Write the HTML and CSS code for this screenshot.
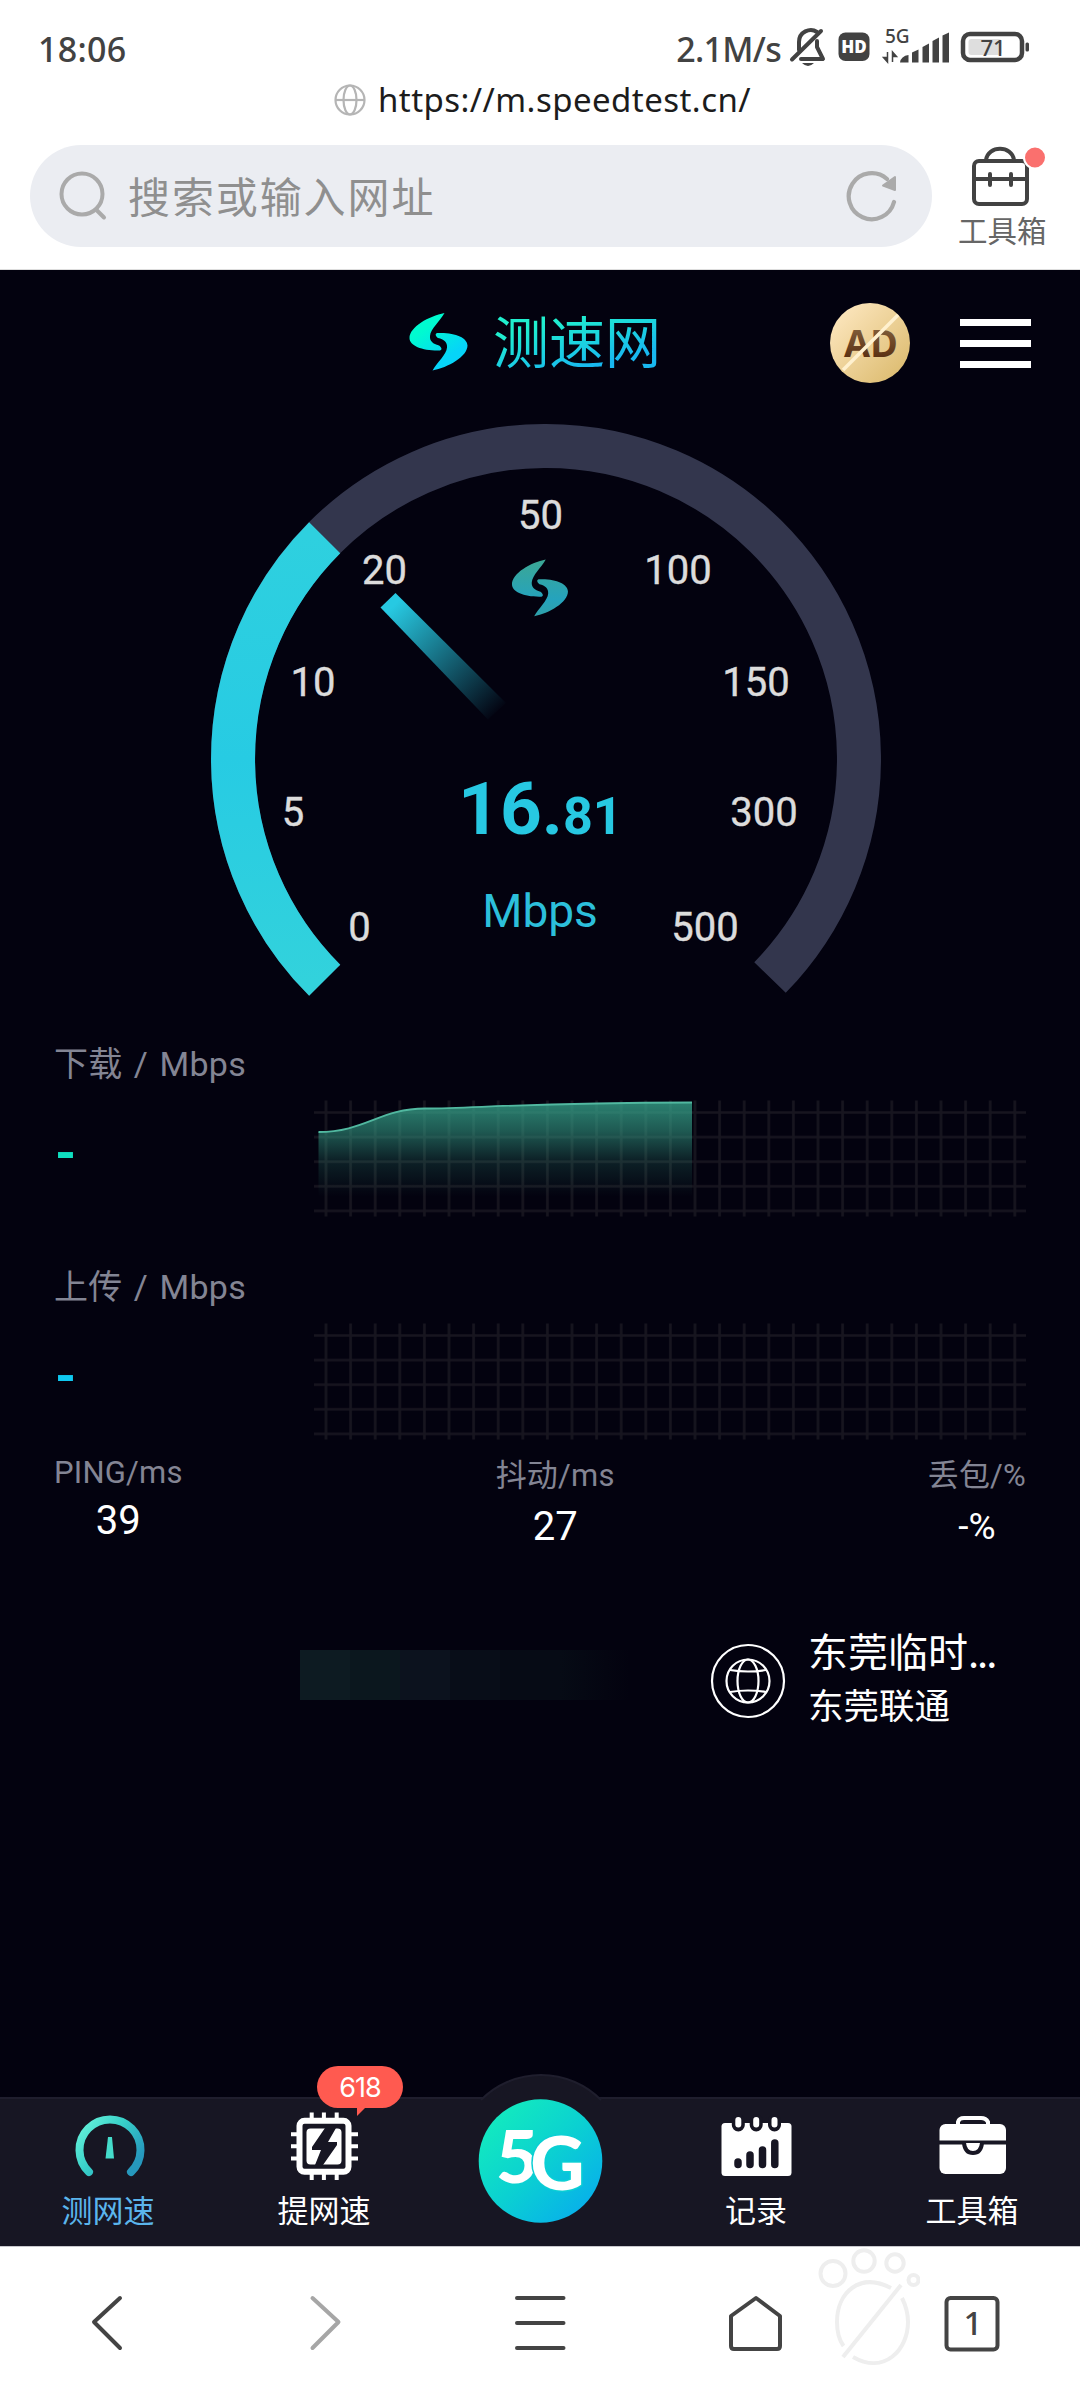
FILE: index.html
```html
<!DOCTYPE html>
<html lang="zh-CN">
<head>
  <meta charset="UTF-8">
  <title>测速网</title>
  <link rel="stylesheet" href="styles.css">
</head>
<body>
  <div class="status">
    <span class="time">18:06</span>
    <span class="rate">2.1M/s</span>
    <svg class="status-icons" viewBox="785 20 255 60">
      <g fill="none" stroke="#424242" stroke-width="4" stroke-linecap="round" stroke-linejoin="round">
        <path d="M799 51V43C799 33 810 28 817 33"/>
        <path d="M817 42V48L823 60H801"/>
        <path d="M792 60.500L821 32"/>
      </g>
      <path d="M802 64H814Q808 70 802 64Z" fill="#424242"/>
      <rect x="838.500" y="33.500" width="31" height="28.500" rx="7" fill="#424242"/>
      <text x="854" y="53.500" class="hd">HD</text>
      <text x="885" y="44" class="net">5G</text>
      <path d="M887.500 53V63L883.500 58.500H887.500M892.500 63V53L896.500 57.500H892.500" fill="#424242" stroke="#424242" stroke-width="1.500"/>
      <g fill="#424242">
        <path d="M900 63.500Q901 57 908.500 56V63.500Z"/>
        <path d="M912 63.500V53.500L918.500 50.500V63.500Z"/>
        <path d="M922.500 63.500V48L929 44.500V63.500Z"/>
        <path d="M932.500 63.500V42L939 38.500V63.500Z"/>
        <path d="M942.500 63.500V36.500L949 33.500V63.500Z"/>
      </g>
      <rect x="963" y="35" width="59" height="26" rx="7" fill="none" stroke="#424242" stroke-width="4.500"/>
      <rect x="968.500" y="40" width="33" height="16" rx="3" fill="#dedede"/>
      <rect x="1025.500" y="43.500" width="3.500" height="9" rx="1.500" fill="#424242"/>
      <text x="993" y="56.500" class="battery">71</text>
    </svg>
  </div>

  <div class="url">
    <svg width="32" height="32" viewBox="0 0 32 32" fill="none" stroke="#b5b5b5" stroke-width="2.200">
      <circle cx="16" cy="16" r="14.500"/>
      <ellipse cx="16" cy="16" rx="6.500" ry="14.500"/>
      <path d="M1.500 16H30.500"/>
    </svg>
    <span>https://m.speedtest.cn/</span>
  </div>

  <div class="search-row">
    <div class="search">
      <svg width="50" height="54" viewBox="0 0 50 54" fill="none" stroke="#aaa" stroke-width="4" stroke-linecap="round">
        <circle cx="24" cy="25" r="20.500"/>
        <path d="M38.500 41L46 48.500"/>
      </svg>
      <span class="placeholder">搜索或输入网址</span>
      <svg width="54" height="54" viewBox="0 0 54 54">
        <path d="M49 33A23 23 0 1 1 42 10" fill="none" stroke="#aaa" stroke-width="4.200" stroke-linecap="round"/>
        <path d="M50 8V21L38 16.500Z" fill="#aaa" stroke="#aaa" stroke-width="2" stroke-linejoin="round"/>
      </svg>
    </div>
    <div class="toolbox">
      <svg width="84" height="68" viewBox="0 0 84 68" fill="none" stroke="#424242" stroke-width="4" stroke-linejoin="round" stroke-linecap="round">
        <rect x="8" y="18" width="53" height="43" rx="5"/>
        <path d="M20 17C22 2 46 2 48 17M8 36H61M24 31V42M45 31V42"/>
        <circle cx="69" cy="14.500" r="11" fill="#fa706e" stroke="#fff" stroke-width="2"/>
      </svg>
      <span>工具箱</span>
    </div>
  </div>

  <div class="page">
    <div class="header">
      <svg class="mark" width="59" height="58" viewBox="0 0 59 58">
        <defs>
          <linearGradient id="markFill" gradientUnits="userSpaceOnUse" x1="10" y1="5" x2="45" y2="55">
            <stop offset="0.200" stop-color="#00fbd0"/>
            <stop offset="0.800" stop-color="#06d4f8"/>
          </linearGradient>
          <path id="bolt" d="M35.500 0C20 3 .5 14 .5 25C.5 33 14 38 31 37.500C34 36.500 32 34 30 32.500C24 31 20.500 28 21 23C21.500 16 31 8 35.500 0ZM23.500 57.400C39 54.400 58.500 43.400 58.500 32.400C58.500 24.400 45 19 28 20C25.500 21 27 23.500 29 25C35 26.400 38.500 29.400 38 34.400C37.500 41.400 28 49.400 23.500 57.400Z"/>
        </defs>
        <use href="#bolt" fill="url(#markFill)"/>
      </svg>
      <span class="brand">测速网</span>
      <svg class="ad" width="80" height="80" viewBox="0 0 80 80">
        <defs>
          <linearGradient id="gold" x1="0" y1="0" x2="1" y2="1">
            <stop offset="0.150" stop-color="#fae3b8"/>
            <stop offset="0.850" stop-color="#dfbf76"/>
          </linearGradient>
          <linearGradient id="brown" x1="0" y1="0" x2="0" y2="1">
            <stop offset="0.200" stop-color="#82603c"/>
            <stop offset="0.900" stop-color="#55290c"/>
          </linearGradient>
        </defs>
        <circle cx="40" cy="40" r="40" fill="url(#gold)"/>
        <text x="41" y="54" textLength="54" lengthAdjust="spacingAndGlyphs" fill="url(#brown)">AD</text>
        <path d="M13 67L68 12" stroke="#fff1cf" stroke-width="3.500"/>
      </svg>
      <div class="burger"><i></i><i></i><i></i></div>
    </div>

    <svg class="gauge" width="1080" height="608" viewBox="0 416 1080 608">
      <defs>
        <linearGradient id="arcFill" x1="0" y1="0" x2="0" y2="1">
          <stop offset="0" stop-color="#2ed0df"/>
          <stop offset="0.500" stop-color="#27cbe3"/>
          <stop offset="1" stop-color="#32d2dc"/>
        </linearGradient>
        <linearGradient id="needle" gradientUnits="userSpaceOnUse" x1="388" y1="600" x2="499" y2="713">
          <stop offset="0.050" stop-color="#27c9e2"/>
          <stop offset="1" stop-color="#27c9e2" stop-opacity="0"/>
        </linearGradient>
        <linearGradient id="dimFill" x1="0" y1="0" x2="0" y2="1">
          <stop offset="0" stop-color="#3ca794"/>
          <stop offset="0.700" stop-color="#25a3bd"/>
          <stop offset="1" stop-color="#30a0a8"/>
        </linearGradient>
      </defs>
      <path d="M324.700 980.300A313 313 0 1 1 770 977.500" fill="none" stroke="#33364d" stroke-width="44"/>
      <path d="M324.700 980.300A313 313 0 0 1 324.700 537.700" fill="none" stroke="url(#arcFill)" stroke-width="44"/>
      <path d="M395.500 593L380.500 607.500L488 719.500L506 703Z" fill="url(#needle)"/>
      <use href="#bolt" fill="url(#dimFill)" transform="translate(511.500 559.500) scale(.965 .99)"/>
      <g class="ticks">
        <text x="359.500" y="940.500">0</text>
        <text x="293" y="825.500">5</text>
        <text x="313" y="696">10</text>
        <text x="384.500" y="584">20</text>
        <text x="540.500" y="528.500">50</text>
        <text x="678" y="584">100</text>
        <text x="756" y="696">150</text>
        <text x="764" y="825.500">300</text>
        <text x="705" y="940.500">500</text>
      </g>
      <text x="458" y="834" class="speed">16.<tspan class="decimals">81</tspan></text>
      <text x="540" y="927" class="unit">Mbps</text>
    </svg>

    <div class="speeds">
      <div class="speed-row">
        <div class="label">下载 / Mbps</div>
        <div class="result">
          <span class="down">-</span>
          <svg width="712" height="117" viewBox="314 1100 712 117">
            <defs>
              <linearGradient id="area" x1="0" y1="0" x2="0" y2="1">
                <stop offset="0" stop-color="#35a189" stop-opacity="0.800"/>
                <stop offset="0.250" stop-color="#35a189" stop-opacity="0.550"/>
                <stop offset="0.500" stop-color="#35a189" stop-opacity="0.200"/>
                <stop offset="0.820" stop-color="#35a189" stop-opacity="0"/>
              </linearGradient>
              <pattern id="mesh" patternUnits="userSpaceOnUse" x="313.700" y="1100.200" width="24.600" height="24.600">
                <path d="M12.300 0V24.600M0 12.300H24.600" stroke="#17151f" stroke-width="2.600"/>
              </pattern>
            </defs>
            <rect x="314" y="1100.500" width="712" height="116" fill="url(#mesh)"/>
            <path d="M318.500 1132C365 1132 380 1108.500 425 1108.500C480 1108 520 1103 692 1102.500V1217H318.500Z" fill="url(#area)"/>
            <path d="M318.500 1132C365 1132 380 1108.500 425 1108.500C480 1108 520 1103 692 1102.500" fill="none" stroke="#51b8a0" stroke-width="1.800"/>
          </svg>
        </div>
      </div>
      <div class="speed-row">
        <div class="label">上传 / Mbps</div>
        <div class="result">
          <span class="up">-</span>
          <svg width="712" height="117" viewBox="314 1100 712 117">
            <rect x="314" y="1100.500" width="712" height="116" fill="url(#mesh)"/>
          </svg>
        </div>
      </div>
    </div>

    <div class="stats">
      <div class="stat ping"><span>PING/ms</span><b>39</b></div>
      <div class="stat"><span>抖动/ms</span><b>27</b></div>
      <div class="stat loss"><span>丢包/%</span><b>-%</b></div>
    </div>

    <div class="server">
      <div class="masked"></div>
      <svg width="76" height="76" viewBox="0 0 76 76" fill="none" stroke="#fff" stroke-width="2.200">
        <circle cx="38" cy="38" r="36"/>
        <circle cx="38" cy="38" r="21.500"/>
        <ellipse cx="38" cy="38" rx="10.500" ry="21.500"/>
        <path d="M20 27Q38 30 56 27M20 49Q38 46 56 49"/>
      </svg>
      <div class="server-name">
        <span>东莞临时<i>...</i></span>
        <small>东莞联通</small>
      </div>
    </div>

    <div class="tabs">
      <div class="tab active">
        <svg width="80" height="80" viewBox="0 0 80 80">
          <defs>
            <linearGradient id="dial" x1="0" y1="0" x2="1" y2="0.700">
              <stop offset="0" stop-color="#6af5dc"/>
              <stop offset="0.500" stop-color="#38d0c8"/>
              <stop offset="1" stop-color="#2698bd"/>
            </linearGradient>
          </defs>
          <path d="M21 65A30.500 30.500 0 1 1 63 65" fill="none" stroke="url(#dial)" stroke-width="8" stroke-linecap="round"/>
          <path d="M40 30H44L46 51.500H37.500Z" fill="#45dccb"/>
        </svg>
        <span>测网速</span>
      </div>
      <div class="tab">
        <svg width="80" height="80" viewBox="0 0 80 80">
          <path d="M27.700 5.500V73M39.900 5.500V73M52.700 5.500V73M7 27.200H74M7 39.300H74M7 51.500H74" stroke="#fff" stroke-width="4"/>
          <rect x="15.500" y="13.800" width="49" height="51" rx="5" fill="#171623" stroke="#fff" stroke-width="6"/>
          <rect x="22.500" y="21.500" width="35" height="36" rx="4" fill="#fff"/>
          <path d="M41 21L28 40V43H37L31 58H39L53 38V35H44L52 21Z" fill="#171623"/>
        </svg>
        <span>提网速</span>
        <div class="badge">618</div>
      </div>
      <div class="tab center">
        <svg width="130" height="150" viewBox="475 2074 130 150">
          <defs>
            <linearGradient id="five" x1="0.150" y1="0.150" x2="0.850" y2="0.850">
              <stop offset="0" stop-color="#12e8c0"/>
              <stop offset="0.500" stop-color="#0bd1d1"/>
              <stop offset="1" stop-color="#08b3e8"/>
            </linearGradient>
          </defs>
          <path d="M481 2100A84.500 84.500 0 0 1 601 2100" fill="#171623" stroke="#1f1e2d" stroke-width="2"/>
          <circle cx="540.500" cy="2161" r="61.800" fill="url(#five)"/>
          <text x="496" y="2182.500" class="five">5<tspan dx="-8" dy="7.500" class="gee">G</tspan></text>
        </svg>
      </div>
      <div class="tab">
        <svg width="80" height="80" viewBox="0 0 80 80">
          <rect x="5.500" y="16" width="70" height="53" rx="3.500" fill="#fff"/>
          <g stroke-linecap="round" fill="none">
            <path d="M22.300 13.500V18M40.200 13.500V18M58.500 13.500V18" stroke="#171623" stroke-width="13"/>
            <path d="M22.300 13V17.500M40.200 13V17.500M58.500 13V17.500" stroke="#fff" stroke-width="6"/>
            <path d="M22 55V57.500M34 48V57.500M46.500 43V57.500M58.800 36V57.500" stroke="#171623" stroke-width="7.500"/>
          </g>
        </svg>
        <span>记录</span>
      </div>
      <div class="tab">
        <svg width="80" height="80" viewBox="0 0 80 80">
          <rect x="7.500" y="17" width="66.500" height="50" rx="6" fill="#fff"/>
          <path d="M26 18V15Q27 11 32 11H49Q54 11 56 15V18" fill="none" stroke="#fff" stroke-width="4"/>
          <path d="M7 35.500H75" stroke="#171623" stroke-width="4"/>
          <path d="M32 36Q33 46 41 46Q49 46 50 36" fill="#fff" stroke="#171623" stroke-width="4"/>
        </svg>
        <span>工具箱</span>
      </div>
    </div>
  </div>

  <div class="browser-nav">
    <svg width="60" height="70" viewBox="0 0 60 70"><path d="M42 11L16 35L42 61" class="line"/></svg>
    <svg width="60" height="70" viewBox="0 0 60 70"><path d="M18.500 11L44.500 35L18.500 61" class="line off"/></svg>
    <svg width="60" height="70" viewBox="0 0 60 70"><path d="M7 11H53.500M7 36H53.500M7 61H53.500" class="line"/></svg>
    <svg width="60" height="70" viewBox="0 0 60 70"><path d="M30 11L54 29V59Q54 62 51 62H8Q5 62 5 59V29Z" class="line"/></svg>
    <svg width="60" height="70" viewBox="0 0 60 70">
      <rect x="4.500" y="11" width="51" height="51.500" rx="4" class="line"/>
      <text x="31" y="47.500" class="count">1</text>
    </svg>
    <svg class="paw" width="110" height="130" viewBox="810 2248 110 130">
      <circle cx="833" cy="2273.500" r="12.500"/>
      <circle cx="864" cy="2261" r="10.700"/>
      <circle cx="895" cy="2263" r="8.700"/>
      <circle cx="913.500" cy="2280" r="5"/>
      <path d="M891 2288C860 2272 837 2292 837 2322Q837 2337 843.500 2346M853 2357C884 2375 908 2350 908 2322Q908 2310 902 2298M901 2285L843 2357"/>
    </svg>
  </div>
</body>
</html>
```
FILE: styles.css
```css
* {
  box-sizing: border-box;
}
body {
  margin: 0;
  width: 1080px;
  height: 2400px;
  background: #fff;
  font-family: Roboto, "Noto Sans CJK SC", sans-serif;
  overflow: hidden;
}
svg {
  display: block;
  flex: none;
}

/* phone status bar */
.status {
  display: flex;
  align-items: center;
  height: 80px;
  padding: 18px 40px 0 38px;
  font-family: "Noto Sans", sans-serif;
  font-size: 34px;
  font-weight: 500;
  line-height: 60px;
  color: #424242;
}
.time {
  letter-spacing: 0.3px;
}
.rate {
  margin-left: auto;
  margin-right: 4px;
  letter-spacing: -0.7px;
}
.status-icons {
  width: 255px;
  height: 60px;
}
.status-icons text {
  fill: #424242;
}
.status-icons .hd {
  font: 800 17px "Open Sans", sans-serif;
  fill: #fff;
  text-anchor: middle;
}
.status-icons .net {
  font: 500 19px "Noto Sans", sans-serif;
}
.status-icons .battery {
  font: 500 22px "Noto Sans", sans-serif;
  text-anchor: middle;
}

.url {
  display: flex;
  align-items: center;
  gap: 12px;
  height: 40px;
  padding-left: 334px;
  font-family: "Noto Sans", sans-serif;
  font-size: 33px;
  letter-spacing: 0.45px;
  line-height: 40px;
  color: #1c1c1c;
}

.search-row {
  display: flex;
  height: 150px;
  padding: 25px 30px 0;
  border-bottom: 1px solid #ddd;
}
.search {
  display: flex;
  align-items: center;
  width: 902px;
  height: 102px;
  padding: 0 33px 0 28px;
  border-radius: 51px;
  background: #ebedf2;
}
.placeholder {
  flex: 1;
  margin: -3px 0 0 20px;
  font-family: "Noto Sans CJK SC", sans-serif;
  font-size: 42px;
  letter-spacing: 1.9px;
  line-height: 60px;
  color: #8f8f8f;
}
.toolbox {
  width: 92px;
  margin: -2px -20px 0 26px;
  font-family: "Noto Sans CJK SC", sans-serif;
  font-size: 29.500px;
  line-height: 36px;
  color: #666;
}
.toolbox svg {
  margin-left: 8px;
}

/* speed test page */
.page {
  display: flex;
  flex-direction: column;
  height: 1976px;
  background: #03020f;
  color: #fff;
}
.header {
  display: flex;
  align-items: center;
  height: 146px;
  padding: 0 49px 0 409px;
}
.mark {
  margin-top: -3px;
}
.brand {
  margin: -9px 0 0 25px;
  font-family: "Noto Sans CJK SC", sans-serif;
  font-size: 56px;
  font-weight: 400;
  line-height: 80px;
  background: linear-gradient(165deg, #20efce 30%, #18b8f0 75%);
  -webkit-background-clip: text;
  background-clip: text;
  color: transparent;
}
.ad {
  margin-left: auto;
  margin-right: 50px;
}
.ad text {
  font: 700 38px "Open Sans", sans-serif;
  text-anchor: middle;
}
.burger {
  display: flex;
  flex-direction: column;
  gap: 14px;
  width: 71px;
}
.burger i {
  height: 7px;
  background: #fff;
}
.ticks {
  font-size: 40px;
  fill: #dcdcdc;
  stroke: #dcdcdc;
  stroke-width: 0.4px;
  text-anchor: middle;
}
.speed {
  font-size: 73px;
  font-weight: 700;
  fill: #27c8e2;
}
.decimals {
  font-size: 52px;
}
.unit {
  font-size: 46px;
  fill: #2cbfdb;
  text-anchor: middle;
}

.speeds {
  display: flex;
  flex-direction: column;
  gap: 45px;
  padding: 15px 54px 0;
}
.speed-row {
  height: 178px;
}
.label {
  font-size: 34px;
  letter-spacing: 0.3px;
  word-spacing: 2.5px;
  line-height: 50px;
  color: #838594;
}
.result {
  display: flex;
  justify-content: space-between;
  margin-top: 11px;
}
.down, .up {
  padding-left: 1px;
  font-size: 54px;
  font-weight: 700;
  line-height: 106px;
}
.down {
  color: #0fdfc0;
}
.up {
  color: #0fc8f0;
}

.stats {
  display: flex;
  justify-content: space-between;
  height: 112px;
  padding: 16px 54px 0;
}
.stat {
  text-align: center;
}
.stat span {
  display: block;
  margin-bottom: 6px;
  font-size: 31px;
  letter-spacing: 0.2px;
  line-height: 40px;
  color: #838594;
}
.stat b {
  display: block;
  font-size: 40px;
  font-weight: 400;
  line-height: 50px;
}
.ping {
  margin-top: -3px;
}
.ping span {
  margin-bottom: 3px;
}
.loss b {
  font-size: 37px;
}

.server {
  display: flex;
  align-items: center;
  margin-top: 72px;
  padding-left: 300px;
}
.masked {
  width: 365px;
  height: 50px;
  margin: -4px 45px 0 0;
  background: linear-gradient(90deg, #0d1b22 0 50px, #0b171e 50px 100px, #0c121e 100px 150px, #080d18 150px 200px, #060b15 200px 260px, #03020f 330px);
}
.server svg {
  margin-top: 8px;
}
.server-name {
  display: flex;
  flex-direction: column;
  margin-left: 22px;
  font-family: "Noto Sans CJK SC", sans-serif;
  font-size: 40px;
  line-height: 53px;
}
.server-name i {
  font-style: normal;
  letter-spacing: -2px;
}
.server-name small {
  font-size: 35.500px;
}

.tabs {
  display: flex;
  height: 149px;
  margin-top: auto;
  border-top: 2px solid #1f1e2d;
  background: #171623;
}
.tab {
  position: relative;
  display: flex;
  flex-direction: column;
  align-items: center;
  width: 216px;
  padding-top: 8px;
}
.tab span {
  margin-top: 2px;
  font-family: "Noto Sans CJK SC", sans-serif;
  font-size: 31px;
  line-height: 40px;
}
.active span {
  color: #5bb5ec;
}
.badge {
  position: absolute;
  top: -33px;
  left: 101px;
  width: 86px;
  height: 42px;
  border-radius: 21px;
  background: #ff5a50;
  font-family: Inter, sans-serif;
  font-size: 27px;
  letter-spacing: -1px;
  line-height: 43px;
  text-align: center;
}
.badge::after {
  content: "";
  position: absolute;
  left: 40px;
  top: 41px;
  border-top: 9px solid #ff5a50;
  border-right: 9px solid transparent;
}
.center svg {
  margin-top: -33px;
}
.five {
  font: 900 73px Lato, sans-serif;
  fill: #fff;
}
.gee {
  font-size: 75px;
  stroke: #0bcfd4;
  stroke-width: 3px;
  paint-order: stroke;
}

.browser-nav {
  position: relative;
  display: flex;
  justify-content: space-around;
  height: 154px;
  padding-top: 40px;
  border-top: 1px solid #c8c8ce;
  background: #fff;
}
.line {
  fill: none;
  stroke: #444;
  stroke-width: 4px;
  stroke-linecap: round;
  stroke-linejoin: round;
}
.off {
  stroke: #a6a6a6;
}
.count {
  font: 500 33px "Noto Sans", sans-serif;
  fill: #444;
  text-anchor: middle;
}
.paw {
  position: absolute;
  left: 810px;
  top: 1px;
  fill: none;
  stroke: #eee;
  stroke-width: 4px;
}
```
